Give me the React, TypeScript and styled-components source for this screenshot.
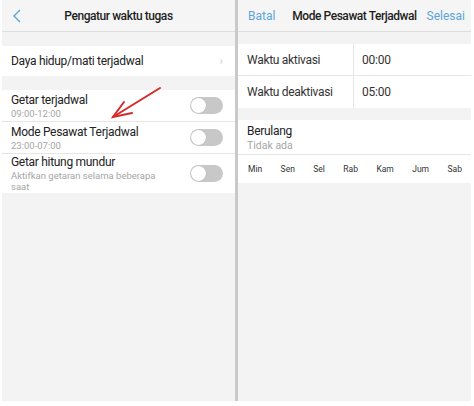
import React from "react";
import styled, { createGlobalStyle } from "styled-components";

const BLUE = "#5aa5d9";
const BG = "#f3f3f3";
const LINE = "#e6e6e6";

const GlobalStyle = createGlobalStyle`
  html, body {
    margin: 0;
    padding: 0;
    background: #ffffff;
  }
  body {
    font-family: Roboto, "Noto Sans", "Liberation Sans", sans-serif;
    color: #222;
  }
`;

const Screen = styled.div`
  display: flex;
  flex-direction: row;
  width: 474px;
  height: 401px;
  padding: 0 3px 0 2px;
  box-sizing: border-box;
  position: relative;
`;

const Panel = styled.div<{ $width?: number }>`
  display: flex;
  flex-direction: column;
  background: ${BG};
  width: ${(p) => (p.$width ? `${p.$width}px` : "auto")};
  flex: ${(p) => (p.$width ? "none" : "1")};
`;

const Divider = styled.div`
  width: 3px;
  background: #c9c9c9;
`;

const Header = styled.div`
  display: flex;
  align-items: center;
  justify-content: space-between;
  height: 32px;
  padding: 0 6px 0 10px;
  background: #f5f5f5;
  border-bottom: 1px solid #dedede;
  box-sizing: border-box;
  position: relative;
`;

const HeaderTitle = styled.div`
  position: absolute;
  left: 0;
  right: 0;
  text-align: center;
  font-size: 12px;
  letter-spacing: -0.45px;
  font-weight: 500;
  color: #1e1e1e;
  pointer-events: none;
`;

const HeaderLink = styled.span`
  font-size: 12px;
  color: ${BLUE};
  position: relative;
`;

const Section = styled.div<{ $top?: number }>`
  margin-top: ${(p) => p.$top ?? 14}px;
  background: #ffffff;
  display: flex;
  flex-direction: column;
`;

const Row = styled.div<{ $height: number }>`
  display: flex;
  align-items: center;
  justify-content: space-between;
  min-height: ${(p) => p.$height}px;
  padding: 0 12px 0 9px;
  border-bottom: 1px solid ${LINE};
  &:last-child {
    border-bottom: none;
  }
`;

const RowText = styled.div`
  display: flex;
  flex-direction: column;
  max-width: 148px;
`;

const Title = styled.span`
  font-size: 12px;
  letter-spacing: -0.3px;
  color: #222;
  line-height: 15px;
`;

const Sub = styled.span<{ $size?: number }>`
  font-size: ${(p) => p.$size ?? 9.5}px;
  color: #a6a6a6;
  line-height: ${(p) => ((p.$size ?? 9.5) > 10 ? 14 : 11)}px;
`;

const Chevron = styled.span`
  color: #cfcfcf;
  font-size: 12px;
`;

const Toggle = styled.div`
  width: 33px;
  height: 17px;
  border-radius: 9px;
  background: #c8c8c8;
  position: relative;
  flex: none;
  &::after {
    content: "";
    position: absolute;
    left: 1px;
    top: 1px;
    width: 15px;
    height: 15px;
    border-radius: 50%;
    background: #ffffff;
    box-shadow: 0 0 1px rgba(0, 0, 0, 0.2);
  }
`;

const TimeRow = styled.div`
  display: flex;
  height: 32px;
  border-bottom: 1px solid ${LINE};
  box-sizing: border-box;
  &:last-child {
    border-bottom: none;
  }
`;

const TimeLabel = styled.div`
  width: 116px;
  display: flex;
  align-items: center;
  padding-left: 9px;
  box-sizing: border-box;
  border-right: 1px solid ${LINE};
  font-size: 12px;
  letter-spacing: -0.3px;
  color: #333;
`;

const TimeValue = styled.div`
  display: flex;
  align-items: center;
  padding-left: 8px;
  font-size: 12px;
  letter-spacing: -0.2px;
  color: #333;
`;

const RepeatBlock = styled.div`
  padding: 4px 9px 1px;
  display: flex;
  flex-direction: column;
  border-bottom: 1px solid ${LINE};
`;

const Days = styled.div`
  display: flex;
  justify-content: space-between;
  align-items: center;
  height: 28px;
  padding: 0 9px 0 10px;
  font-size: 8.5px;
  color: #333;
`;

const Arrow = styled.svg`
  position: absolute;
  left: 0;
  top: 0;
  pointer-events: none;
`;

const days = ["Min", "Sen", "Sel", "Rab", "Kam", "Jum", "Sab"];

export default function App() {
  return (
    <>
      <GlobalStyle />
      <Screen>
        <Panel $width={233}>
          <Header>
            <svg width="10" height="14" viewBox="0 0 10 14">
              <path d="M8 1 L2 7 L8 13" fill="none" stroke={BLUE} strokeWidth="1.4" />
            </svg>
            <HeaderTitle>Pengatur waktu tugas</HeaderTitle>
          </Header>
          <Section $top={14}>
            <Row $height={30}>
              <Title>Daya hidup/mati terjadwal</Title>
              <Chevron>›</Chevron>
            </Row>
          </Section>
          <Section $top={14}>
            <Row $height={31}>
              <RowText>
                <Title>Getar terjadwal</Title>
                <Sub>09:00-12:00</Sub>
              </RowText>
              <Toggle />
            </Row>
            <Row $height={31}>
              <RowText>
                <Title>Mode Pesawat Terjadwal</Title>
                <Sub>23:00-07:00</Sub>
              </RowText>
              <Toggle />
            </Row>
            <Row $height={39}>
              <RowText>
                <Title>Getar hitung mundur</Title>
                <Sub>Aktifkan getaran selama beberapa saat</Sub>
              </RowText>
              <Toggle />
            </Row>
          </Section>
        </Panel>
        <Divider />
        <Panel>
          <Header>
            <HeaderLink>Batal</HeaderLink>
            <HeaderTitle>Mode Pesawat Terjadwal</HeaderTitle>
            <HeaderLink>Selesai</HeaderLink>
          </Header>
          <Section $top={12}>
            <TimeRow>
              <TimeLabel>Waktu aktivasi</TimeLabel>
              <TimeValue>00:00</TimeValue>
            </TimeRow>
            <TimeRow>
              <TimeLabel>Waktu deaktivasi</TimeLabel>
              <TimeValue>05:00</TimeValue>
            </TimeRow>
          </Section>
          <Section $top={12}>
            <RepeatBlock>
              <Title>Berulang</Title>
              <Sub $size={10.5}>Tidak ada</Sub>
            </RepeatBlock>
            <Days>
              {days.map((d) => (
                <span key={d}>{d}</span>
              ))}
            </Days>
          </Section>
        </Panel>
        <Arrow width="474" height="401">
          <g stroke="#d62a2a" strokeWidth="2" strokeLinecap="round" fill="none">
            <path d="M160 88 L113 117" />
            <path d="M124 102 L113 117 L132 113" />
          </g>
        </Arrow>
      </Screen>
    </>
  );
}
